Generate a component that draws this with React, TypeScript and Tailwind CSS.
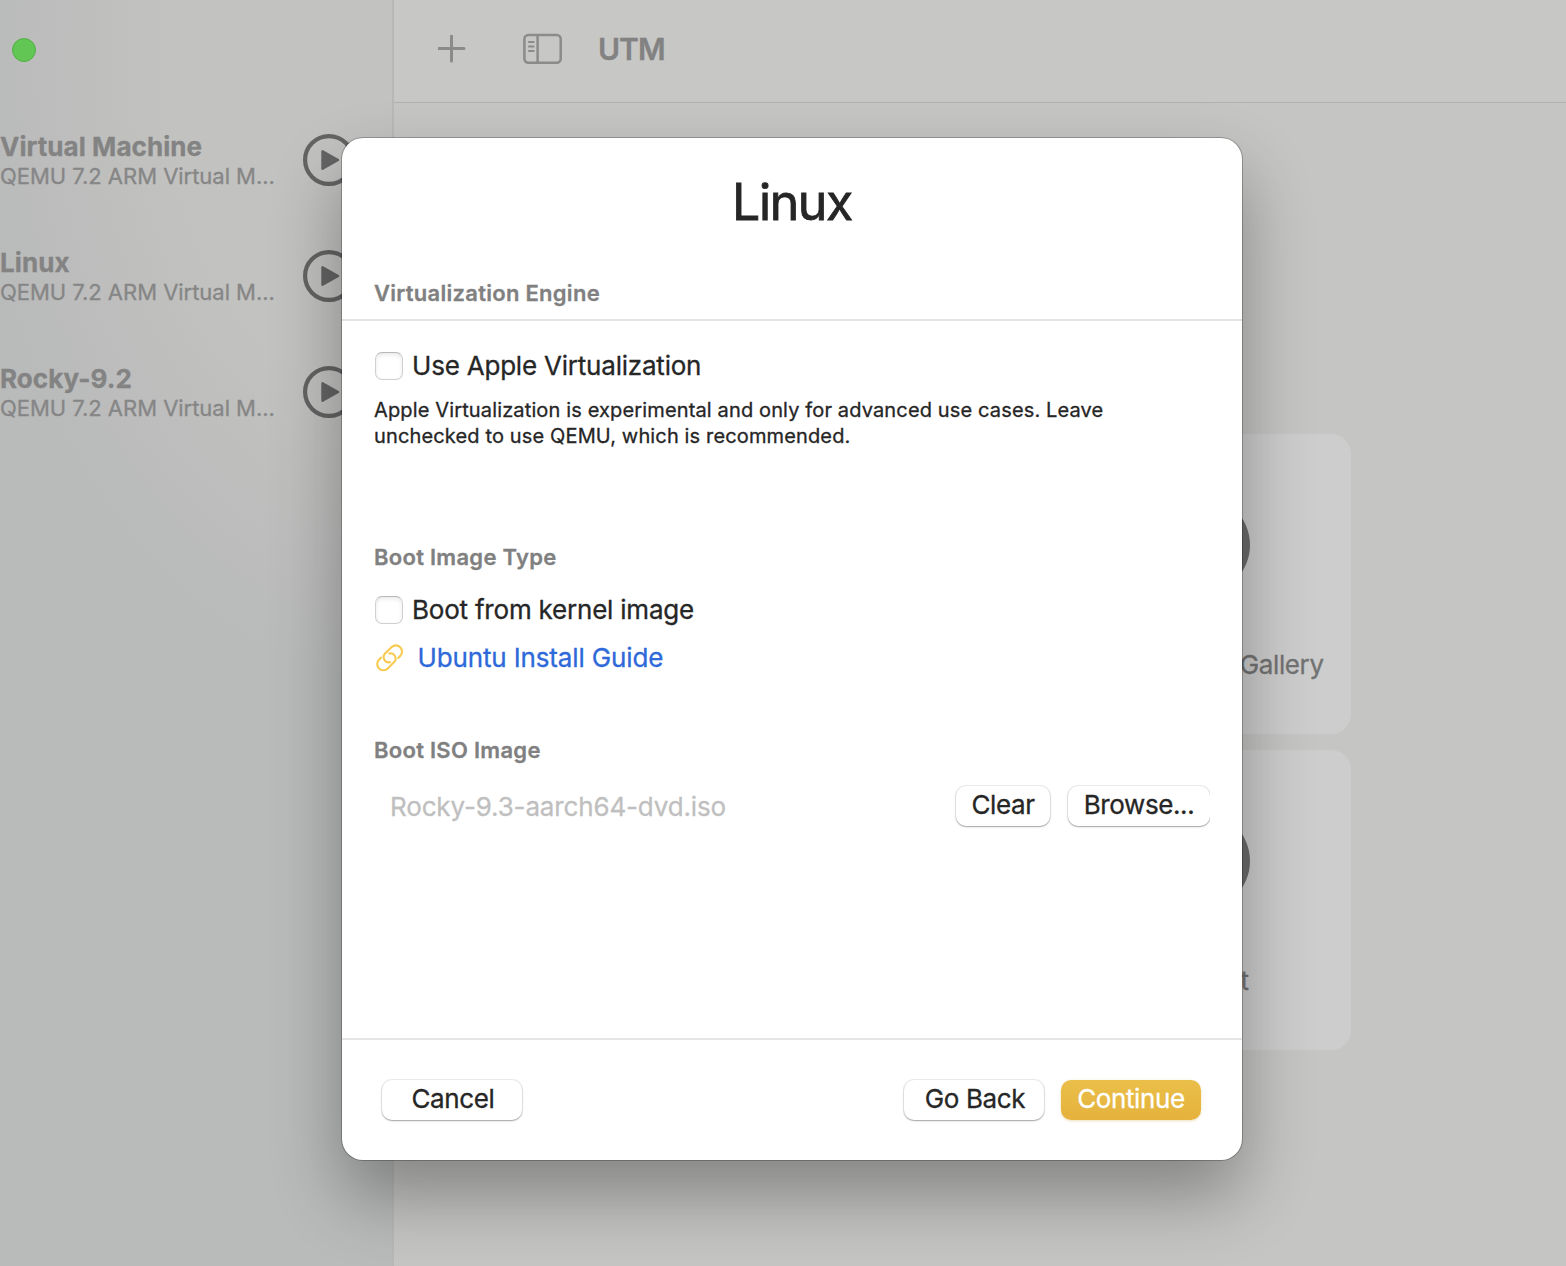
import type { ReactNode } from "react";

const machines = ["Virtual Machine", "Linux", "Rocky-9.2"];

function PlayIcon() {
  return (
    <svg width="52" height="52" viewBox="0 0 52 52" className="block shrink-0">
      <circle cx="26" cy="26" r="23.9" fill="none" stroke="#646464" strokeWidth="4.2" />
      <path d="M19.5 17.3v17.4L35 26z" fill="#646464" stroke="#646464" strokeWidth="2.4" strokeLinejoin="round" />
    </svg>
  );
}

function PlusIcon() {
  return (
    <svg width="28" height="28" viewBox="0 0 28 28" className="block">
      <path d="M13.5 1v25M1 13.5h25" stroke="#8b8b89" strokeWidth="3" strokeLinecap="round" />
    </svg>
  );
}

function SidebarIcon() {
  return (
    <svg width="40" height="32" viewBox="0 0 40 32" className="block" fill="none" stroke="#8b8b89">
      <rect x="1.4" y="2" width="36.3" height="27.8" rx="4" strokeWidth="2.5" />
      <path d="M14.6 2v28" strokeWidth="2.5" />
      <path d="M6 9h4.6M6 13.5h4.6M6 18h4.6" strokeWidth="2.1" strokeLinecap="round" />
    </svg>
  );
}

function LinkIcon() {
  return (
    <svg width="28" height="28" viewBox="0 0 28 28" className="block" fill="none" stroke="#f7ca52" strokeWidth="2.1" strokeLinecap="round">
      <g transform="translate(13.6 13.8) rotate(-45)">
        <path d="M6 6.2H8.800a6.200 6.200 0 0 0 0-12.400H-.2a5.200 5.200 0 0 0-2.600 9.600" />
        <path d="M-6-6.200H-8.800a6.200 6.200 0 0 0 0 12.400H.2a5.200 5.200 0 0 0 2.600-9.600" />
      </g>
    </svg>
  );
}

function SectionTitle({ children }: { children: ReactNode }) {
  return <h2 className="text-[22px] leading-7 font-semibold tracking-[0.28px] text-[#808080]">{children}</h2>;
}

function Checkbox({ label }: { label: string }) {
  return (
    <label className="flex h-8 items-center gap-[9px]">
      <span className="ml-px h-7 w-7 rounded-[7px] border border-[#d0d0d0] border-t-[#b8b8b8] bg-white shadow-[inset_0_2px_4px_rgba(0,0,0,0.09)]" />
      <span className="text-[26px] leading-8 tracking-[-0.21px] whitespace-nowrap text-[#262626]">{label}</span>
    </label>
  );
}

const buttonShape =
  "flex h-10 items-center justify-center rounded-[10px] pb-[2px] text-[26px] leading-8 tracking-[-0.38px] whitespace-nowrap";
const plainButton =
  "bg-white text-[#262626] shadow-[0_0_0_1px_rgba(0,0,0,0.07),0_1px_1px_rgba(0,0,0,0.2),0_1px_3px_rgba(0,0,0,0.12)]";

function Card({ label }: { label: string }) {
  return (
    <div className="flex h-[300px] w-[300px] flex-col items-center rounded-[20px] bg-[#cdcdcd] pt-[62px]">
      <div className="h-[98px] w-[98px] rounded-full bg-[#6c6c6c]" />
      <div className="mt-[55px] text-[26px] leading-8 tracking-[-0.4px] whitespace-nowrap text-[#737373]">{label}</div>
    </div>
  );
}

export default function App() {
  return (
    <div className="relative flex h-[1266px] w-[1566px] overflow-hidden bg-[#c5c5c3] font-[Inter,sans-serif] [-webkit-text-stroke:0.3px]">
      <aside className="flex w-[394px] shrink-0 flex-col border-r-2 border-[#b8b8b9] bg-[radial-gradient(ellipse_420px_620px_at_400px_60px,#c2c2c0_0%,#c2c2c0_55%,#b9baba_100%)]">
        <div className="mt-[38px] ml-3 h-6 w-6 rounded-full border border-[#55b048] bg-[#62c655]" />
        <div className="mt-[72px] flex flex-col gap-16">
          {machines.map((name) => (
            <div key={name} className="flex h-[52px]">
              <div className="w-[303px] shrink-0">
                <div className="text-[26px] leading-[26px] font-bold tracking-[0.07px] text-[#838383]">{name}</div>
                <div className="mt-[2px] text-[22px] leading-[28px] tracking-[-0.03px] whitespace-nowrap text-[#868686]">QEMU 7.2 ARM Virtual M...</div>
              </div>
              <PlayIcon />
            </div>
          ))}
        </div>
      </aside>

      <main className="flex flex-1 flex-col">
        <header className="flex h-[103px] items-center border-b border-[#b1b1b0] bg-[#c7c7c5] pb-[4px] pl-[44px]">
          <PlusIcon />
          <div className="ml-[57px]">
            <SidebarIcon />
          </div>
          <div className="ml-[35px] text-[30px] leading-9 font-semibold tracking-[-1px] text-[#828282]">UTM</div>
        </header>
        <div className="mt-[331px] mr-[215px] flex flex-col items-end gap-4">
          <Card label="Browse UTM Gallery" />
          <Card label="Support" />
        </div>
      </main>

      <section className="absolute top-[138px] left-[342px] flex h-[1022px] w-[900px] flex-col rounded-[21px] bg-white shadow-[0_0_0_1px_rgba(0,0,0,0.24),0_36px_70px_rgba(0,0,0,0.33)]">
        <h1 className="pt-[34px] text-center text-[50px] leading-[60px] tracking-[-1.4px] text-[#262626] [-webkit-text-stroke:0.8px]">Linux</h1>
        <div className="mt-[47px] flex h-[42px] items-start border-b-2 border-[#e3e3e3] px-8">
          <SectionTitle>Virtualization Engine</SectionTitle>
        </div>
        <div className="flex flex-1 flex-col px-8 pt-[29px]">
          <Checkbox label="Use Apple Virtualization" />
          <p className="mt-[15px] text-[20px] leading-[26px] tracking-[0.14px] text-[#262626]">
            Apple Virtualization is experimental and only for advanced use cases. Leave
            <br />
            unchecked to use QEMU, which is recommended.
          </p>
          <div className="mt-[94px]">
            <SectionTitle>Boot Image Type</SectionTitle>
          </div>
          <div className="mt-[23px]">
            <Checkbox label="Boot from kernel image" />
          </div>
          <a className="mt-4 flex h-8 items-center gap-[13.5px] pl-[2px] text-[26px] leading-8 tracking-[-0.14px] text-[#2e68d9]">
            <LinkIcon />
            <span className="whitespace-nowrap">Ubuntu Install Guide</span>
          </a>
          <div className="mt-[62px]">
            <SectionTitle>Boot ISO Image</SectionTitle>
          </div>
          <div className="mt-[22px] flex h-10 items-center gap-[18px] pl-4">
            <span className="flex-1 pt-[2px] text-[26px] leading-8 tracking-[-0.15px] whitespace-nowrap text-[#bfbfbf]">Rocky-9.3-aarch64-dvd.iso</span>
            <button className={`${buttonShape} ${plainButton} w-[94px]`}>Clear</button>
            <div className="-my-1 -ml-1 overflow-hidden py-1 pl-1">
              <button className={`${buttonShape} ${plainButton} w-[142px]`}>Browse...</button>
            </div>
          </div>
        </div>
        <footer className="flex h-[122px] shrink-0 items-start border-t-2 border-[#e5e5e5] pt-10 pr-[41px] pl-10">
          <button className={`${buttonShape} ${plainButton} w-[140px] pl-[2px]`}>Cancel</button>
          <div className="flex-1" />
          <button className={`${buttonShape} ${plainButton} mr-[17px] w-[140px] pl-[2px]`}>Go Back</button>
          <button className={`${buttonShape} w-[140px] bg-linear-to-b from-[#eabf49] to-[#e5b23c] text-white shadow-[0_1px_3px_rgba(200,150,30,0.3)]`}>
            Continue
          </button>
        </footer>
      </section>
    </div>
  );
}
